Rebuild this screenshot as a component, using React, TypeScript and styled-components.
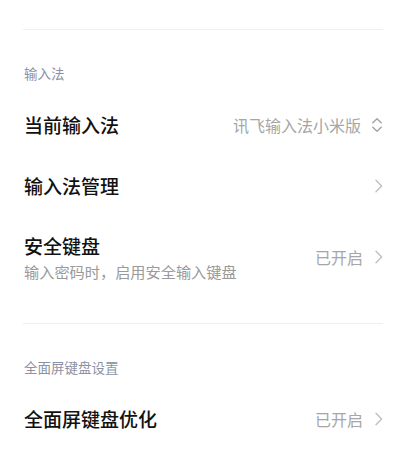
import React from 'react';
import styled, {createGlobalStyle} from 'styled-components';

const GlobalStyle = createGlobalStyle`
	html, body {
		margin: 0;
		padding: 0;
		background: #ffffff;
	}
	body {
		font-family: 'Noto Sans CJK SC', 'Noto Sans', sans-serif;
		-webkit-font-smoothing: antialiased;
	}
`;

const Page = styled.div`
	width: 400px;
	height: 457px;
	overflow: hidden;
	box-sizing: border-box;
	padding: 29px 17px 0 23px;
	background: #ffffff;
`;

const Section = styled.section`
	display: flex;
	flex-direction: column;
	& + & {
		margin-top: 25px;
	}
`;

const Divider = styled.div`
	height: 1px;
	background-color: #efeff1;
`;

const Header = styled.div`
	padding: 33px 1px 11px;
	font-size: 13.5px;
	line-height: 20px;
	color: #8c92a6;
`;

const Row = styled.div<{$tall?: boolean}>`
	display: flex;
	align-items: center;
	justify-content: space-between;
	min-height: ${({$tall}) => ($tall ? '48px' : '61px')};
	padding: ${({$tall}) => ($tall ? '17px 0' : '0')};
`;

const Texts = styled.div`
	display: flex;
	flex-direction: column;
	gap: 2px;
	padding-left: 1px;
`;

const Title = styled.div`
	font-size: 19px;
	line-height: 26px;
	font-weight: 500;
	color: #111111;
`;

const Subtitle = styled.div`
	font-size: 15.2px;
	line-height: 20px;
	color: #9a9a9a;
`;

const Trail = styled.div`
	display: flex;
	align-items: center;
	gap: 10px;
`;

const Value = styled.span`
	font-size: 16px;
	line-height: 22px;
	color: #a6a6a6;
`;

const Icon = styled.svg`
	display: block;
	flex-shrink: 0;
`;

const Chevron = () => (
	<Icon width="10" height="16" viewBox="0 0 10 16">
		<path
			d="M3 2.2 L8.6 8 L3 13.8"
			fill="none"
			stroke="#c2c2c2"
			strokeWidth="1.5"
			strokeLinecap="round"
			strokeLinejoin="round"
		/>
	</Icon>
);

const UpDown = () => (
	<Icon width="12" height="18" viewBox="0 0 12 18">
		<path
			d="M1.8 6.8 L6 2.8 L10.2 6.8 M1.8 11.2 L6 15.2 L10.2 11.2"
			fill="none"
			stroke="#a6a6a6"
			strokeWidth="1.5"
			strokeLinecap="round"
			strokeLinejoin="round"
		/>
	</Icon>
);

interface ItemProps {
	title: string;
	subtitle?: string;
	value?: string;
	picker?: boolean;
}

const Item = ({title, subtitle, value, picker}: ItemProps) => (
	<Row $tall={!!subtitle}>
		<Texts>
			<Title>{title}</Title>
			{subtitle && <Subtitle>{subtitle}</Subtitle>}
		</Texts>
		<Trail>
			{value && <Value>{value}</Value>}
			{picker ? <UpDown /> : <Chevron />}
		</Trail>
	</Row>
);

export default function App() {
	return (
		<Page>
			<GlobalStyle />
			<Section>
				<Divider />
				<Header>输入法</Header>
				<Item title="当前输入法" value="讯飞输入法小米版" picker />
				<Item title="输入法管理" />
				<Item
					title="安全键盘"
					subtitle="输入密码时，启用安全输入键盘"
					value="已开启"
				/>
			</Section>
			<Section>
				<Divider />
				<Header>全面屏键盘设置</Header>
				<Item title="全面屏键盘优化" value="已开启" />
			</Section>
		</Page>
	);
}
